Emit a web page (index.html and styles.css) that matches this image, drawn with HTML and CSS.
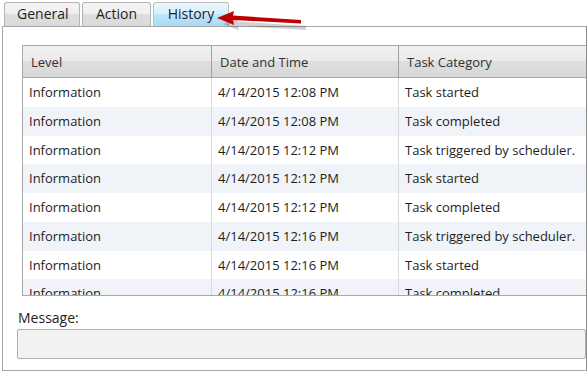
FILE: index.html
```html
<!DOCTYPE html>
<html lang="en">
<head>
  <meta charset="UTF-8">
  <title>History</title>
  <link rel="stylesheet" href="styles.css">
</head>
<body>
  <div class="window">
    <div class="tabs">
      <div class="tab">General</div>
      <div class="tab">Action</div>
      <div class="tab active">History</div>
    </div>

    <svg class="arrow" width="110" height="40" viewBox="0 0 110 40">
      <path d="M17 21 L33 14 L32 18.5 L100 23 L100 27 L32 23 L33 27.5 Z" fill="#000" opacity="0.18" transform="translate(2,3)"/>
      <path d="M13 18 L30 11 L29 15.5 L97 20 L97 23.5 L29 20 L30 25 Z" fill="#c00000"/>
    </svg>

    <div class="panel">
      <div class="grid">
        <div class="row head">
          <div class="cell">Level</div>
          <div class="cell">Date and Time</div>
          <div class="cell">Task Category</div>
        </div>
        <div class="rows">
          <div class="row">
            <div class="cell">Information</div>
            <div class="cell">4/14/2015 12:08 PM</div>
            <div class="cell">Task started</div>
          </div>
          <div class="row">
            <div class="cell">Information</div>
            <div class="cell">4/14/2015 12:08 PM</div>
            <div class="cell">Task completed</div>
          </div>
          <div class="row">
            <div class="cell">Information</div>
            <div class="cell">4/14/2015 12:12 PM</div>
            <div class="cell">Task triggered by scheduler.</div>
          </div>
          <div class="row">
            <div class="cell">Information</div>
            <div class="cell">4/14/2015 12:12 PM</div>
            <div class="cell">Task started</div>
          </div>
          <div class="row">
            <div class="cell">Information</div>
            <div class="cell">4/14/2015 12:12 PM</div>
            <div class="cell">Task completed</div>
          </div>
          <div class="row">
            <div class="cell">Information</div>
            <div class="cell">4/14/2015 12:16 PM</div>
            <div class="cell">Task triggered by scheduler.</div>
          </div>
          <div class="row">
            <div class="cell">Information</div>
            <div class="cell">4/14/2015 12:16 PM</div>
            <div class="cell">Task started</div>
          </div>
          <div class="row">
            <div class="cell">Information</div>
            <div class="cell">4/14/2015 12:16 PM</div>
            <div class="cell">Task completed</div>
          </div>
        </div>
      </div>

      <div class="message-label">Message:</div>
      <div class="message-box"></div>
    </div>
  </div>
</body>
</html>
```

FILE: styles.css
```css
body {
  margin: 0;
  background-color: #fff;
  font-family: 'Open Sans', 'Noto Sans', sans-serif;
  color: #1e1e1e;
}
.window {
  position: relative;
  width: 587px;
  height: 371px;
  overflow: hidden;
}
.tabs {
  display: flex;
  gap: 2px;
  padding: 2px 0 0 4px;
  height: 24px;
}
.tab {
  box-sizing: border-box;
  height: 24px;
  padding: 0 12px;
  border: 1px solid #b4b4b4;
  border-bottom: none;
  border-radius: 3px 3px 0 0;
  background: linear-gradient(#f4f4f4, #f0f0f0 45%, #dedede 50%, #dadada);
  font-size: 14px;
  line-height: 22px;
  color: #1e1e1e;
}
.tab:nth-child(1) { width: 76px; text-align: center; }
.tab:nth-child(2) { width: 69px; text-align: center; }
.tab.active {
  width: 76px;
  text-align: center;
  background: linear-gradient(#eaf6fd, #d9f0fc 45%, #bee6fd 50%, #a7d9f5);
  border-color: #c0c0c0;
}
.arrow {
  position: absolute;
  left: 204px;
  top: 0;
}
.panel {
  box-sizing: border-box;
  height: 345px;
  margin-left: 2px;
  border: 1px solid #a8a8a8;
  border-right: 1px solid #8c8c8c;
  padding: 18px 0 0 19px;
  overflow: hidden;
}
.grid {
  box-sizing: border-box;
  height: 251px;
  border: 1px solid #a8a8a8;
  border-right: none;
  overflow: hidden;
}
.row {
  display: grid;
  grid-template-columns: 188px 187px 1fr;
  height: 28.75px;
}
.rows .row:nth-child(even) {
  background-color: #f0f4f8;
}
.cell {
  padding-left: 6px;
  font-size: 13px;
  line-height: 28px;
  white-space: nowrap;
  border-left: 1px solid #dadada;
}
.cell:first-child {
  border-left: none;
}
.head {
  height: 31px;
  background: linear-gradient(#f1f1f1, #ebebeb 48%, #dedede 50%, #d8d8d8);
  border-bottom: 1px solid #a8a8a8;
  color: #333;
}
.head .cell {
  line-height: 33px;
  padding-left: 8px;
  border-left: 1px solid #a0a0a0;
}
.head .cell:first-child {
  border-left: none;
}
.message-label {
  margin: 13px 0 0 -4px;
  font-size: 14px;
  line-height: 17px;
  color: #1e1e1e;
}
.message-box {
  box-sizing: border-box;
  height: 30px;
  margin: 3px 0 0 -5px;
  background-color: #f2f2f2;
  border: 1px solid #b0b0b0;
  border-radius: 2px;
}
```
